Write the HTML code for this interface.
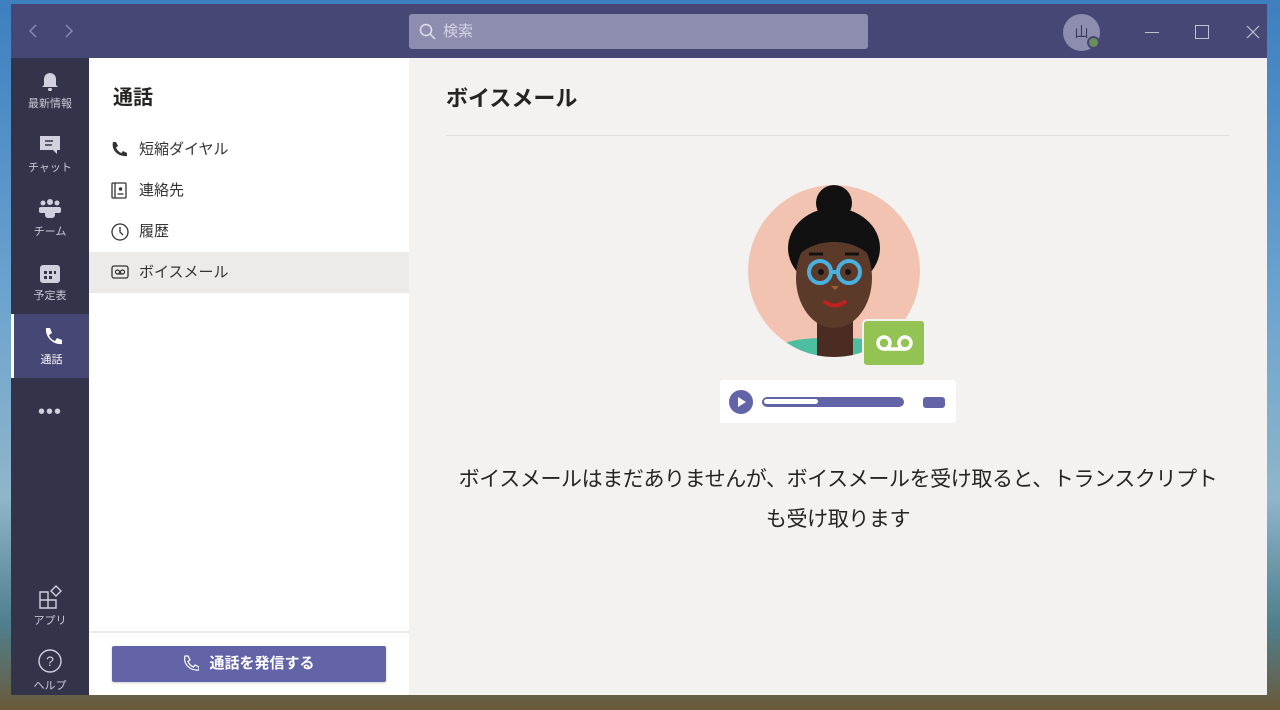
<!DOCTYPE html>
<html><head><meta charset="utf-8"><style>
*{margin:0;padding:0;box-sizing:border-box}
body{width:1280px;height:710px;overflow:hidden;position:relative;font-family:"Liberation Sans","Noto Sans CJK JP",sans-serif;background:linear-gradient(180deg,#3d7fbf 0%,#6aa2cf 40%,#8fb6c9 70%,#4f7f8e 88%,#6a5a3a 100%)}
.win{position:absolute;left:11px;top:4px;width:1256px;height:691px;background:#f3f2f1;overflow:hidden}
.title{position:absolute;left:0;top:0;width:1256px;height:54px;background:#464775}
.search{position:absolute;left:398px;top:10px;width:459px;height:35px;background:#8d8db0;border-radius:3px;color:#d4d4e4;font-size:15px;line-height:35px;padding-left:34px}
.rail{position:absolute;left:0;top:54px;width:78px;height:637px;background:#33344a}
.ri{position:absolute;left:0;width:78px;height:64px;text-align:center;color:#c8c8d6;font-size:11px}
.ri svg{display:block;margin:12px auto 3px}
.list{position:absolute;left:78px;top:54px;width:320px;height:637px;background:#fff}
.item{position:absolute;left:0;width:320px;height:41px;font-size:15px;color:#333;line-height:41px;padding-left:50px}
.item svg{position:absolute;left:22px;top:12px}
.main{position:absolute;left:398px;top:54px;width:858px;height:637px;background:#f3f2f1}
</style></head><body>
<div class="win">
<div class="title">
 <svg style="position:absolute;left:18px;top:20px" width="50" height="14"><path d="M7 1L1 7l6 6M37 1l6 6-6 6" stroke="#8a8ab0" stroke-width="1.5" fill="none"/></svg>
 <div class="search"><svg style="position:absolute;left:10px;top:9px" width="17" height="17"><circle cx="7" cy="7" r="5.5" stroke="#e0e0ea" stroke-width="1.5" fill="none"/><path d="M11 11l5 5" stroke="#e0e0ea" stroke-width="1.5"/></svg>検索</div>
 <div style="position:absolute;left:1052px;top:10px;width:37px;height:37px;border-radius:50%;background:#8d8db0;color:#3a3a5a;font-size:14px;text-align:center;line-height:37px">山</div>
 <div style="position:absolute;left:1076px;top:32px;width:13px;height:13px;border-radius:50%;background:#6b8f5a;border:2px solid #464775"></div>
 <div style="position:absolute;left:1134px;top:28px;width:14px;height:1px;background:#c0c0d6"></div>
 <div style="position:absolute;left:1184px;top:21px;width:14px;height:14px;border:1px solid #c0c0d6"></div>
 <svg style="position:absolute;left:1235px;top:21px" width="14" height="14"><path d="M1 1l12 12M13 1L1 13" stroke="#c0c0d6" stroke-width="1.2"/></svg>
</div>
<div class="rail">
 <div class="ri" style="top:0"><svg width="20" height="22" viewBox="0 0 20 22"><path d="M4 15V9a6 6 0 0112 0v6l2 2H2z" fill="#d0d0de"/><rect x="8" y="18" width="4" height="3" rx="1.5" fill="#d0d0de"/></svg>最新情報</div>
 <div class="ri" style="top:64px"><svg width="22" height="22"><path d="M1 2h20v14h-3v4l-4-4H1z" fill="#d0d0de"/><path d="M6 7h8M6 11h7" stroke="#33344a" stroke-width="1.5"/></svg>チャット</div>
 <div class="ri" style="top:128px"><svg width="24" height="22"><circle cx="5" cy="5" r="2.5" fill="#d0d0de"/><circle cx="12" cy="4" r="3" fill="#d0d0de"/><circle cx="19" cy="5" r="2.5" fill="#d0d0de"/><rect x="1" y="9" width="22" height="6" rx="2" fill="#d0d0de"/><rect x="7" y="9" width="10" height="11" rx="3" fill="#d0d0de"/></svg>チーム</div>
 <div class="ri" style="top:192px"><svg width="22" height="22"><rect x="1" y="3" width="20" height="18" rx="3" fill="#d0d0de"/><g fill="#33344a"><rect x="5" y="9" width="3" height="3"/><rect x="10" y="9" width="3" height="3"/><rect x="15" y="9" width="2" height="3"/><rect x="5" y="14" width="3" height="3"/><rect x="10" y="14" width="3" height="3"/></g></svg>予定表</div>
 <div class="ri" style="top:256px;background:#464775;color:#fff;border-left:3px solid #fff;width:78px"><svg width="20" height="22"><path d="M4 2l4 0 2 5-3 2c1 3 3 5 6 6l2-3 5 2v4c-9 1-17-7-16-16z" fill="#fff"/></svg>通話</div>
 <div style="position:absolute;left:27px;top:343px;color:#d0d0de;font-size:20px;letter-spacing:1px">•••</div>
 <div class="ri" style="top:515px"><svg width="24" height="24"><path d="M2 7h8v8H2zM10 15h8v8h-8zM2 15h8v8H2zM13 6l5-5 5 5-5 5z" stroke="#d0d0de" stroke-width="1.4" fill="none"/></svg>アプリ</div>
 <div class="ri" style="top:578px"><svg width="26" height="26"><circle cx="13" cy="13" r="11" stroke="#d0d0de" stroke-width="1.4" fill="none"/><text x="13" y="18" font-size="14" fill="#d0d0de" text-anchor="middle" font-family="Liberation Sans">?</text></svg>ヘルプ</div>
</div>
<div class="list">
 <div style="position:absolute;left:24px;top:23px;font-size:20px;font-weight:bold;color:#252423">通話</div>
 <div class="item" style="top:71px"><svg width="16" height="16"><path d="M2 1h3l2 4-2 1.5c1 2.5 3 4.5 5.5 5.5L12 10l4 2v3C7 16 0 9 2 1z" fill="#333"/></svg>短縮ダイヤル</div>
 <div class="item" style="top:112px"><svg width="16" height="17"><rect x="1" y="1" width="14" height="15" rx="1" stroke="#333" stroke-width="1.3" fill="none"/><path d="M4 1v15" stroke="#333" stroke-width="1.3"/><circle cx="9.5" cy="7" r="1.7" fill="#333"/><path d="M6.5 12h6" stroke="#333" stroke-width="1.3"/></svg>連絡先</div>
 <div class="item" style="top:153px"><svg width="18" height="18"><circle cx="9" cy="9" r="8" stroke="#333" stroke-width="1.3" fill="none"/><path d="M9 4v5l3 3" stroke="#333" stroke-width="1.3" fill="none"/></svg>履歴</div>
 <div class="item" style="top:194px;background:#edebe9"><svg width="18" height="16"><rect x="1" y="2" width="16" height="12" rx="2" stroke="#333" stroke-width="1.3" fill="none"/><circle cx="6.5" cy="8" r="2" stroke="#333" stroke-width="1.2" fill="none"/><circle cx="11.5" cy="8" r="2" stroke="#333" stroke-width="1.2" fill="none"/><path d="M6.5 10h5" stroke="#333" stroke-width="1.2"/></svg>ボイスメール</div>
 <div style="position:absolute;left:0;top:573px;width:320px;height:2px;background:#edebe9"></div>
 <div style="position:absolute;left:23px;top:588px;width:274px;height:36px;background:#6264a7;border-radius:2px;box-shadow:0 1px 2px rgba(0,0,0,.2);color:#fff;font-size:15px;font-weight:bold;line-height:36px;text-align:center"><svg style="vertical-align:-3px;margin-right:10px" width="16" height="16"><path d="M2 1h3l2 4-2 1.5c1 2.5 3 4.5 5.5 5.5L12 10l4 2v3C7 16 0 9 2 1z" stroke="#fff" stroke-width="1.2" fill="none"/></svg>通話を発信する</div>
</div>
<div class="main">
 <div style="position:absolute;left:37px;top:23px;font-size:22px;font-weight:bold;color:#252423">ボイスメール</div>
 <div style="position:absolute;left:37px;top:77px;width:783px;height:1px;background:#e1dfdd"></div>
 <svg style="position:absolute;left:338px;top:125px" width="180" height="180" viewBox="0 0 180 180">
  <defs><clipPath id="c"><circle cx="87" cy="88" r="86"/></clipPath></defs>
  <circle cx="87" cy="88" r="86" fill="#f3c3b2"/>
  <g clip-path="url(#c)">
   <path d="M20 175c10-20 40-20 67-20s57 0 67 20z" fill="#4dbfa0"/>
   <rect x="70" y="120" width="36" height="60" fill="#4a2c22"/>
   <circle cx="87" cy="20" r="18" fill="#111"/>
   <ellipse cx="87" cy="65" rx="46" ry="40" fill="#111"/>
   <ellipse cx="87" cy="95" rx="38" ry="50" fill="#5c3a2a"/>
   <path d="M49 75c0-20 15-30 38-30s38 10 38 30c-10-12-25-16-38-16s-28 4-38 16z" fill="#111"/>
   <path d="M62 71h14M98 71h14" stroke="#111" stroke-width="3"/>
   <circle cx="73" cy="89" r="11" stroke="#4ab0e0" stroke-width="4" fill="none"/>
   <circle cx="102" cy="89" r="11" stroke="#4ab0e0" stroke-width="4" fill="none"/>
   <path d="M84 89h7" stroke="#4ab0e0" stroke-width="4"/>
   <circle cx="74" cy="89" r="3" fill="#111"/><circle cx="101" cy="89" r="3" fill="#111"/>
   <path d="M84 103l4 4 4-4" fill="#a0602a"/>
   <path d="M77 118c7 6 15 6 22 0" stroke="#c02020" stroke-width="4" fill="none"/>
  </g>
 </svg>
 <div style="position:absolute;left:453px;top:261px;width:64px;height:48px;background:#92c353;border-radius:5px;border:2px solid #f3f2f1"></div>
 <svg style="position:absolute;left:466px;top:276px" width="40" height="18"><circle cx="9" cy="9" r="6" stroke="#fff" stroke-width="3.5" fill="none"/><circle cx="30" cy="9" r="6" stroke="#fff" stroke-width="3.5" fill="none"/><path d="M9 15h21" stroke="#fff" stroke-width="3.5"/></svg>
 <div style="position:absolute;left:311px;top:322px;width:236px;height:43px;background:#fff;border-radius:3px"></div>
 <svg style="position:absolute;left:320px;top:332px" width="220" height="24"><circle cx="12" cy="12" r="12" fill="#6264a7"/><path d="M9 7v10l8-5z" fill="#fff"/><rect x="33" y="7" width="142" height="10" rx="5" fill="#6264a7"/><rect x="35" y="9" width="54" height="5" rx="2.5" fill="#fff"/><rect x="194" y="7" width="22" height="11" rx="3" fill="#6264a7"/></svg>
 <div style="position:absolute;left:0;top:402px;width:858px;text-align:center;font-size:21px;letter-spacing:-0.4px;color:#252423;line-height:40px">ボイスメールはまだありませんが、ボイスメールを受け取ると、トランスクリプト<br>も受け取ります</div>
</div>
</div>
</body></html>
